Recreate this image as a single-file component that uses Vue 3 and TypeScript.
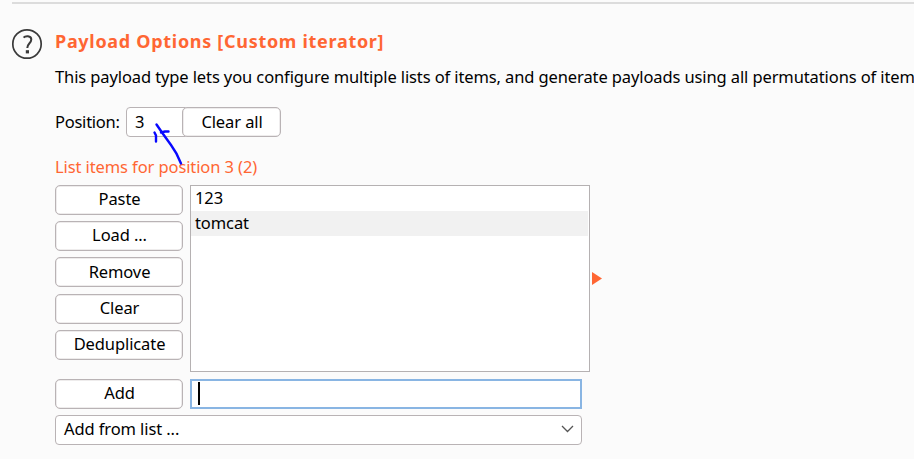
<script setup lang="ts">
import { ref } from 'vue'

const position = ref(3)
const items = ref<string[]>(['123', 'tomcat'])
const actions = [
  { label: 'Paste', cls: 'paste' },
  { label: 'Load ...', cls: 'load' },
  { label: 'Remove', cls: 'remove' },
  { label: 'Clear', cls: 'clear' },
  { label: 'Deduplicate', cls: 'dedup' },
]
</script>

<template>
  <main class="page">
    <div class="rule"></div>
    <header class="head">
      <svg class="help" width="32" height="32" viewBox="0 0 32 32">
        <circle cx="16" cy="16" r="14.2" fill="none" stroke="#3a3a3a" stroke-width="1.7" />
        <path d="M12.6 9.6C14 7.8 20.3 7 20.3 11.6C20.3 15.2 16.3 15.4 16.3 20" fill="none" stroke="#3a3a3a" stroke-width="2" />
        <rect x="14.8" y="22.2" width="3.2" height="3.2" fill="#3a3a3a" />
      </svg>
      <h1 class="title"><span>Payload Options [Custom iterator]</span></h1>
    </header>
    <p class="desc"><span>This payload type lets you configure multiple lists of items, and generate payloads using all permutations of item</span></p>

    <section class="position">
      <label class="position-label"><span>Position:</span></label>
      <div class="spinner">{{ position }}</div>
      <button class="btn clear-all"><span>Clear all</span></button>
      <svg class="scribble" width="36" height="46" viewBox="0 0 36 46">
        <path d="M5.5 4.5L11 12.5L20 25Q26 33 30 43.5M10 12.5L14 11.5H17.5M3.5 12.5L5 15.5V21.5" fill="none" stroke="#0808ff" stroke-width="2.4" stroke-linecap="round" stroke-linejoin="round" />
      </svg>
    </section>

    <h2 class="subtitle"><span>List items for position {{ position }} ({{ items.length }})</span></h2>

    <section class="lists">
      <div class="actions">
        <button v-for="a in actions" :key="a.cls" class="btn" :class="a.cls"><span>{{ a.label }}</span></button>
      </div>
      <ul class="items">
        <li v-for="item in items" :key="item"><span>{{ item }}</span></li>
      </ul>
      <svg class="marker" width="10" height="13" viewBox="0 0 10 13"><path d="M0 0L10 6.5L0 13Z" fill="#ff6633" /></svg>
    </section>

    <section class="add-row">
      <button class="btn add"><span>Add</span></button>
      <div class="entry"><i class="caret"></i></div>
    </section>
    <div class="select">
      <span>Add from list ...</span>
      <svg width="13" height="8" viewBox="0 0 13 8"><path d="M1 1L6.5 6.5L12 1" fill="none" stroke="#555" stroke-width="1.3" /></svg>
    </div>
  </main>
</template>

<style>
body { background: #fbfbfb; overflow: hidden; }
</style>
<style scoped>
* { box-sizing: border-box; }
.page {
  width: 914px; height: 459px; overflow: hidden; padding-top: 2px;
  background: #fbfbfb; color: #000; letter-spacing: -0.1px;
  font: 16.5px/24px "Noto Sans", "Open Sans", sans-serif;
}
.rule { height: 2px; margin-left: 12px; background: #dcdcdc; }
.head { display: flex; height: 32px; margin: 24px 0 0 11px; }
.help { flex: none; }
.title { margin: 1px 0 0 12px; font-size: 18px; line-height: 24px; font-weight: 700; color: #ff6633; letter-spacing: 0.7px; white-space: nowrap; }
.desc { margin: 5px 0 0 55px; height: 24px; white-space: nowrap; letter-spacing: -0.11px; }
.position { position: relative; display: flex; height: 30px; margin: 18px 0 0 55px; align-items: center; }
.position-label { width: 71px; letter-spacing: -0.25px; }
.spinner { width: 60px; height: 30px; padding-left: 8px; line-height: 28px; border: 1px solid #b9b3b5; border-radius: 4px 0 0 4px; background: #fff; }
.btn {
  display: flex; align-items: center; justify-content: center; width: 128px; height: 30px; padding: 0 0 2px 1px;
  border: 1px solid #b9b3b5; border-radius: 5px; background: #fff; color: #000; font: inherit; letter-spacing: inherit;
  box-shadow: inset 0 0 0 0.5px #ddd9da;
}
.remove { padding-bottom: 0; }
.clear-all { width: 99px; margin-left: -4px; padding-bottom: 0; }
.scribble { position: absolute; left: 96px; top: 13px; z-index: 1; }
.subtitle { margin: 18px 0 0 55px; height: 24px; font-size: inherit; font-weight: 400; color: #ff6633; }
.lists { display: flex; margin: 6px 0 0 55px; height: 187px; }
.actions { display: flex; flex-direction: column; gap: 6px; }
.clear { margin-top: 1px; }
.items { width: 400px; margin: 0 0 0 7px; padding: 0 1px 0 0; list-style: none; border: 1px solid #b5b1b2; background: #fff; }
.items li { height: 25px; padding-left: 4px; line-height: 24px; }
.items li:last-child { background: #f1f1f1; }
.marker { margin: 87px 0 0 2px; }
.add-row { display: flex; gap: 7px; margin: 7px 0 0 55px; }
.entry { width: 392px; height: 30px; padding: 1px 6px; border: 2px solid #89b5e3; background: #fff; }
.caret { display: block; width: 2px; height: 23px; background: #000; }
.select { display: flex; align-items: center; justify-content: space-between; width: 527px; height: 30px; margin: 6px 0 0 55px; padding: 0 7px 2px 8px; border: 1px solid #b9b3b5; border-radius: 4px; background: #fff; }
</style>
